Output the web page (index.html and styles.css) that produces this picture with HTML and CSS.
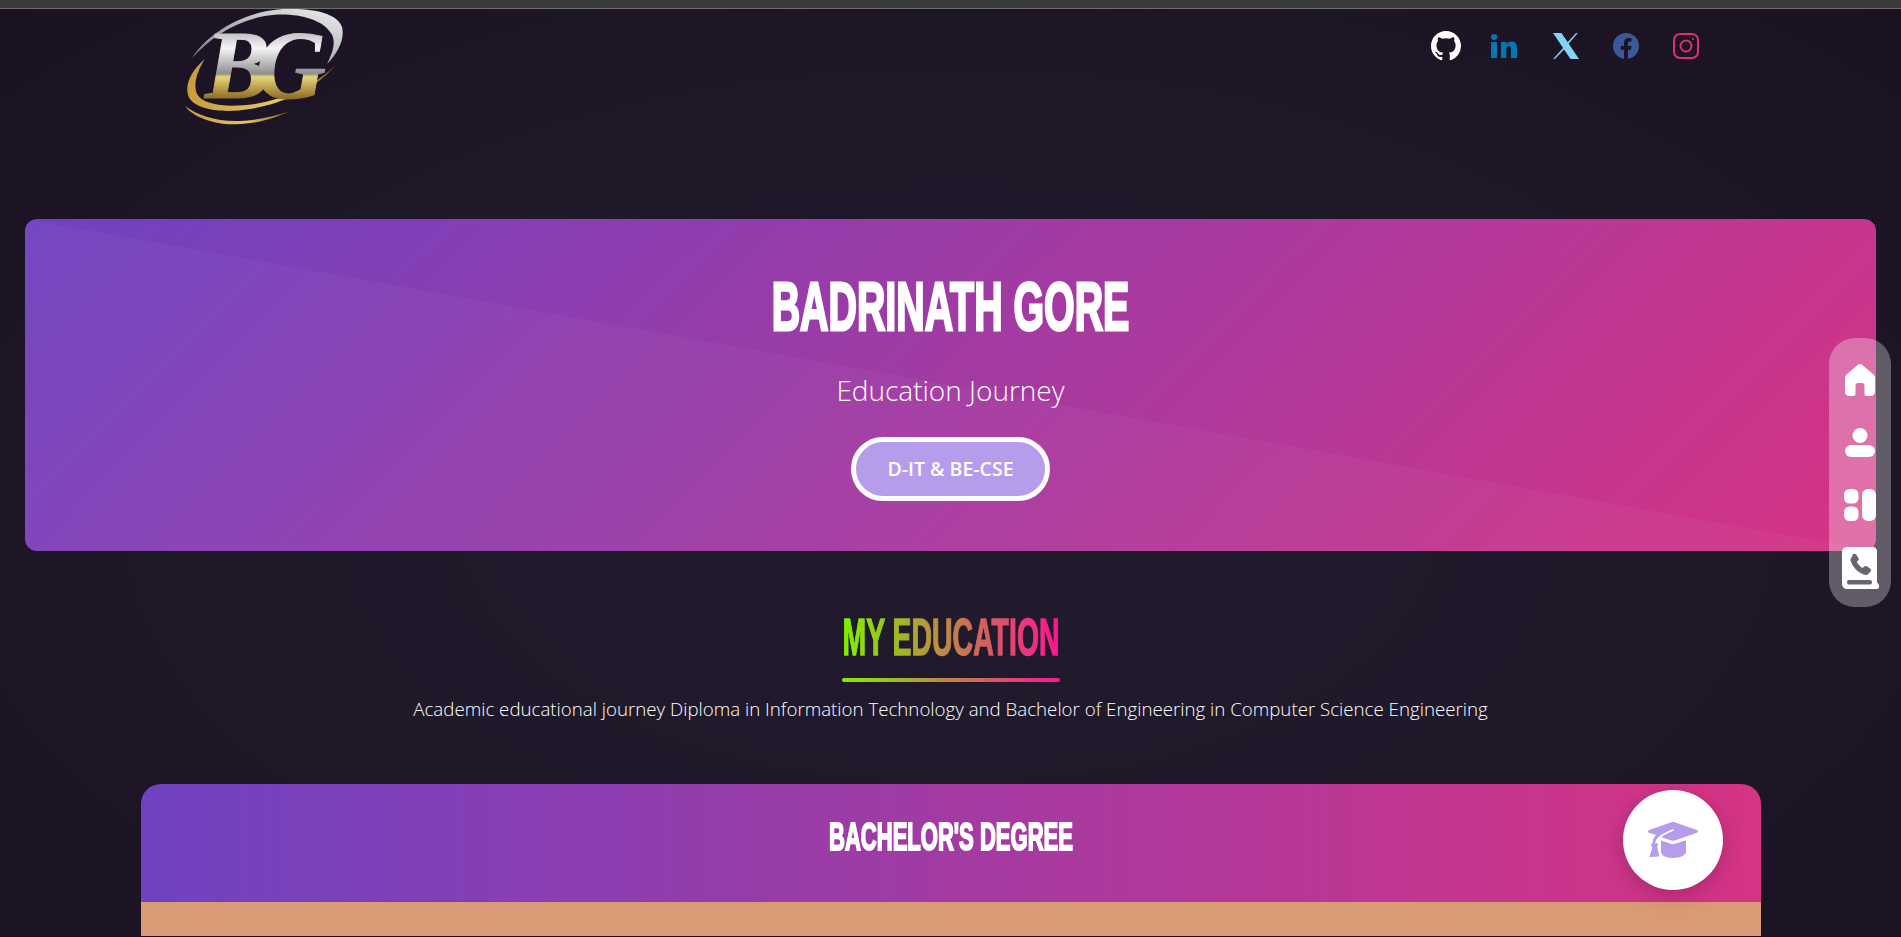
FILE: index.html
```html
<!DOCTYPE html>
<html lang="en">
<head>
    <meta charset="UTF-8">
    <meta name="viewport" content="width=device-width, initial-scale=1.0">
    <title>Badrinath Gore - Education</title>
    <link rel="stylesheet" href="styles.css">
</head>
<body>
    <div class="top-strip"></div>

    <header class="site-header">
        <a class="logo" href="#">
            <svg width="158" height="116" viewBox="0 0 158 116">
                <defs>
                    <linearGradient id="metal" gradientUnits="userSpaceOnUse" x1="0" y1="25" x2="0" y2="89">
                        <stop offset="0" stop-color="#c4c4c8"/>
                        <stop offset="0.22" stop-color="#f5f5f5"/>
                        <stop offset="0.48" stop-color="#b4b4b8"/>
                        <stop offset="0.62" stop-color="#8e8e90"/>
                        <stop offset="0.67" stop-color="#e8d47a"/>
                        <stop offset="1" stop-color="#8f6f26"/>
                    </linearGradient>
                    <linearGradient id="silver" x1="0" y1="1" x2="1" y2="0">
                        <stop offset="0" stop-color="#77777c"/>
                        <stop offset="1" stop-color="#f0f0f2"/>
                    </linearGradient>
                    <linearGradient id="gold" x1="0" y1="0" x2="1" y2="0">
                        <stop offset="0" stop-color="#c79b3c"/>
                        <stop offset="0.6" stop-color="#e6c55f"/>
                        <stop offset="1" stop-color="#7d5f1e"/>
                    </linearGradient>
                </defs>
                <path fill="url(#silver)" d="M7 49C24 22 62 2 98 0c26-1 54 3 59 18 3 12-4 26-15 37 6-12 10-24 3-32C136 10 112 4 88 6 54 9 26 28 7 49z"/>
                <path fill="url(#gold)" d="M20 50C6 62 0 75 3 86c4 14 32 19 62 14 35-6 65-20 85-43-22 20-50 33-80 38-28 4-52 1-58-10-4-10 0-23 8-35z"/>
                <path fill="url(#gold)" d="M0 97c8 11 30 20 55 18 20-1 35-6 50-13-17 6-33 9-50 10-23 1-43-6-55-15z"/>
                <text class="logo-text" x="20" y="89" fill="url(#metal)" stroke="url(#metal)" stroke-width="1">BG</text>
            </svg>
        </a>
        <nav class="socials">
            <a href="#" class="social">
                <svg width="30" height="30" viewBox="0 0 16 16"><path fill="#fff" d="M8 0C3.58 0 0 3.58 0 8c0 3.54 2.29 6.53 5.47 7.59.4.07.55-.17.55-.38 0-.19-.01-.82-.01-1.49-2.01.37-2.53-.49-2.69-.94-.09-.23-.48-.94-.82-1.13-.28-.15-.68-.52-.01-.53.63-.01 1.08.58 1.23.82.72 1.21 1.87.87 2.33.66.07-.52.28-.87.51-1.07-1.78-.2-3.64-.89-3.64-3.95 0-.87.31-1.59.82-2.15-.08-.2-.36-1.02.08-2.12 0 0 .67-.21 2.2.82.64-.18 1.32-.27 2-.27.68 0 1.36.09 2 .27 1.53-1.04 2.2-.82 2.2-.82.44 1.1.16 1.92.08 2.12.51.56.82 1.27.82 2.15 0 3.07-1.87 3.75-3.65 3.95.29.25.54.73.54 1.48 0 1.07-.01 1.93-.01 2.2 0 .21.15.46.55.38A8.013 8.013 0 0016 8c0-4.42-3.58-8-8-8z"/></svg>
            </a>
            <a href="#" class="social social-in">
                <svg width="26" height="24" viewBox="0 0 26 24"><circle cx="3" cy="3" r="3" fill="#0077b5"/><path fill="#0077b5" d="M0 8h6v16H0zM10 8h5.600v2.300C16.600 8.700 18.500 7.600 20.700 7.600c4 0 5.300 2.600 5.300 6.400v10h-6v-8.900c0-2-.6-3-2.100-3-1.700 0-2.600 1.200-2.600 3.100V24H10z"/></svg>
            </a>
            <a href="#" class="social">
                <svg width="26" height="26" viewBox="0 0 26 26"><path fill="#83d4f2" d="M0 0h8.500L26 26h-8.500z"/><path fill="#83d4f2" d="M23 0h1.800L14.500 12l-1-1.400zM10.500 14.600l1 1.400L2 26H.2z"/></svg>
            </a>
            <a href="#" class="social">
                <svg width="26" height="26" viewBox="0 0 26 26"><circle cx="13" cy="13" r="13" fill="#3b5998"/><path fill="#1b1425" d="M11 26V16.800H7.800V13H11v-2.900C11 6.900 12.900 5.100 15.800 5.100c1.400 0 2.800.25 2.800.25v3.100H17c-1.500 0-2 .95-2 1.900V13h3.500l-.56 3.800H15V26z"/></svg>
            </a>
            <a href="#" class="social">
                <svg width="26" height="26" viewBox="0 0 26 26" fill="none" stroke="#e1306c" stroke-width="2"><rect x="1" y="1" width="24" height="24" rx="6"/><circle cx="13" cy="13" r="5.500"/><circle cx="20" cy="6" r="1" fill="#e1306c" stroke="none"/></svg>
            </a>
        </nav>
    </header>

    <section class="hero">
        <h1 class="hero-title">BADRINATH GORE</h1>
        <p class="hero-sub">Education Journey</p>
        <a href="#" class="hero-btn">D-IT &amp; BE-CSE</a>
    </section>

    <section class="section-head">
        <h2 class="section-title">MY EDUCATION</h2>
        <div class="section-line"></div>
        <p class="section-text">Academic educational journey Diploma in Information Technology and Bachelor of Engineering in Computer Science Engineering</p>
    </section>

    <section class="degree-card">
        <div class="degree-head">
            <h3 class="degree-title">BACHELOR'S DEGREE</h3>
            <div class="degree-icon">
                <svg width="50" height="36" viewBox="0 0 50 36">
                    <path fill="#b89cec" d="M25 0c.6 0 1.200.1 1.800.3l21.400 7.400c1 .4 1.800 1 1.800 1.700s-.8 1.300-1.800 1.700L26.800 18.500c-1.200.4-2.400.4-3.600 0l-11-3.800c-2 1.500-3.200 3.400-3.500 5.600.8.500 1.300 1.400 1.300 2.300 0 .8-.3 1.500-.9 2l2.100 8.800c.1.500-.2 1-.7 1.100l-8.300.6c-.5 0-.8-.4-.7-.9l3-8.800c-.8-.5-1.400-1.300-1.400-2.300 0-1 .6-1.900 1.500-2.400.2-2.900 1.400-5.600 3.400-7.700L1.800 11.100C.8 10.700 0 10.100 0 9.400s.8-1.300 1.800-1.700L23.200.3C23.800.1 24.400 0 25 0zM13 18.500l9.800 3.300c1.400.5 3 .5 4.400 0l10.800-3.600V30c0 3-5.800 6-13 6s-12-3-12-6z"/>
                    <path fill="none" stroke="#fff" stroke-width="1.500" stroke-linecap="round" d="M8 21c.4-5 6-8.500 17-13"/>
                </svg>
            </div>
        </div>
        <div class="degree-body"></div>
    </section>
    <div class="bottom-edge"></div>

    <aside class="side-nav">
        <a href="#" class="side-link">
            <svg width="30" height="32" viewBox="0 0 30 32"><path fill="#fff" d="M13 .8c1.200-1 2.800-1 4 0l11.500 9.700c1 .8 1.500 2 1.500 3.200V28c0 2.200-1.800 4-4 4h-4.500c-1.100 0-2-.9-2-2v-8.500c0-1.400-1.100-2.500-2.500-2.500h-4c-1.400 0-2.500 1.100-2.500 2.500V30c0 1.100-.9 2-2 2H4c-2.200 0-4-1.800-4-4V13.700c0-1.200.5-2.400 1.500-3.200z"/></svg>
        </a>
        <a href="#" class="side-link">
            <svg width="30" height="29" viewBox="0 0 30 29"><circle cx="15" cy="7.500" r="7.500" fill="#fff"/><rect x="0" y="17" width="30" height="12" rx="6" fill="#fff"/></svg>
        </a>
        <a href="#" class="side-link">
            <svg width="32" height="32" viewBox="0 0 32 32" fill="#fff"><rect x="0" y="0" width="14.500" height="14.500" rx="5.500"/><rect x="0" y="17.500" width="14.500" height="14.500" rx="5.500"/><rect x="18" y="0" width="14" height="32" rx="6"/></svg>
        </a>
        <a href="#" class="side-link side-link-book">
            <svg width="37" height="42" viewBox="0 0 37 42"><path fill="#fff" d="M5 0h26c2.200 0 4 1.800 4 4v31l2 3v2c0 1.100-.9 2-2 2H5c-2.800 0-5-2.200-5-5V5C0 2.200 2.200 0 5 0z"/><rect x="5" y="33" width="25" height="4.500" rx="2" fill="#6b6570"/><path transform="translate(-2.500 -3) scale(1.220)" fill="#6b6570" d="M11 8.500c.8-.8 2.100-.7 2.700.2l1.800 2.700c.5.700.4 1.600-.2 2.200l-1.100 1.100c1 2.100 2.800 3.900 4.900 4.900l1.100-1.100c.6-.6 1.500-.7 2.200-.2l2.700 1.800c.9.600 1 1.900.2 2.700l-1.500 1.500c-.9.900-2.200 1.300-3.400.9-5.300-1.700-9.500-5.900-11.200-11.200-.4-1.200 0-2.500.9-3.400z"/></svg>
        </a>
    </aside>
</body>
</html>
```

FILE: styles.css
```css
/* page */
html, body {
    height: 937px;
    overflow: hidden;
}

body {
    margin: 0;
    font-family: "Open Sans", "Noto Sans", sans-serif;
    color: #fff;
    background: radial-gradient(ellipse at 50% 55%, #221b2e 0%, #1f1829 55%, #1a1122 100%);
}

a {
    color: inherit;
    text-decoration: none;
}

.top-strip {
    height: 8px;
    background-color: #3a3a3a;
    border-bottom: 1px solid #6c6c6c;
}

/* header */
.site-header {
    height: 210px;
    padding: 0 185px;
    display: flex;
    justify-content: space-between;
    align-items: flex-start;
    box-sizing: border-box;
}

.logo {
    display: block;
    height: 116px;
}

.logo-text {
    font-family: "Liberation Serif", serif;
    font-style: italic;
    font-weight: bold;
    font-size: 97px;
    letter-spacing: -14px;
}

.socials {
    display: flex;
    margin-top: 22px;
}

.social {
    width: 60px;
    height: 30px;
    display: flex;
    align-items: center;
    justify-content: center;
}

.social-in {
    padding-right: 4px;
    box-sizing: border-box;
}

/* hero banner */
.hero {
    position: relative;
    height: 332px;
    margin: 0 25px;
    padding-top: 53px;
    box-sizing: border-box;
    border-radius: 12px;
    overflow: hidden;
    text-align: center;
    background: linear-gradient(135deg, #6f42c1 0%, #d63384 100%);
}

.hero::before {
    content: "";
    position: absolute;
    inset: 0;
    background-color: rgba(255, 255, 255, 0.035);
    clip-path: polygon(0 0, 100% 100%, 0 100%);
}

.hero-title, .hero-sub, .hero-btn {
    position: relative;
}

/* no condensed face installed, so the bold sans is squeezed */
.hero-title {
    margin: 0;
    font-family: "Liberation Sans", sans-serif;
    font-size: 69px;
    line-height: 70px;
    font-weight: 700;
    -webkit-text-stroke: 3px #fff;
    transform: scaleX(0.57);
}

.hero-sub {
    margin: 28px 0 0;
    font-size: 28px;
    line-height: 40px;
    font-weight: 300;
}

.hero-btn {
    display: inline-block;
    margin-top: 27px;
    width: 199px;
    height: 64px;
    line-height: 54px;
    box-sizing: border-box;
    border: 5px solid #fff;
    border-radius: 32px;
    background-color: #b89cec;
    font-size: 19.5px;
    font-weight: 600;
}

/* section heading */
.section-head {
    text-align: center;
    padding-top: 62px;
}

.section-title {
    margin: 0 auto;
    width: 390px;
    font-family: "Liberation Sans", sans-serif;
    font-size: 51px;
    line-height: 50px;
    font-weight: 700;
    white-space: nowrap;
    transform: scaleX(0.558);
    background: linear-gradient(90deg, #82f000, #ff1493);
    -webkit-background-clip: text;
    background-clip: text;
    color: transparent;
    -webkit-text-stroke: 1.5px transparent;
}

.section-line {
    width: 218px;
    height: 4px;
    margin: 15px auto 0;
    border-radius: 2px;
    background: linear-gradient(90deg, #82f000, #ff1493);
}

.section-text {
    margin: 14px 0 0;
    font-size: 18.7px;
    line-height: 26px;
    font-weight: 300;
}

/* degree card */
.degree-card {
    margin: 62px 140px 0 141px;
    border-radius: 20px 20px 0 0;
    overflow: hidden;
}

.degree-head {
    height: 118px;
    padding-top: 33px;
    box-sizing: border-box;
    text-align: center;
    background: linear-gradient(90deg, #6f42c1, #d63384);
}

.degree-title {
    margin: 0;
    font-family: "Liberation Sans", sans-serif;
    font-size: 38px;
    line-height: 40px;
    font-weight: 700;
    -webkit-text-stroke: 2px #fff;
    transform: scaleX(0.58);
}

.degree-icon {
    position: absolute;
    left: 1623px;
    top: 790px;
    width: 100px;
    height: 100px;
    border-radius: 50%;
    background-color: #fff;
    box-shadow: 0 5px 20px rgba(0, 0, 0, 0.2);
    display: flex;
    align-items: center;
    justify-content: center;
}

.degree-body {
    height: 34px;
    background-color: #d99a76;
}

.bottom-edge {
    height: 1px;
    background-color: #1a1122;
}

/* floating side nav */
.side-nav {
    position: fixed;
    left: 1829px;
    top: 338px;
    width: 62px;
    height: 269px;
    padding-top: 26px;
    box-sizing: border-box;
    border-radius: 26px;
    background-color: rgba(255, 255, 255, 0.3);
    display: flex;
    flex-direction: column;
    align-items: center;
    gap: 32px;
}

.side-link {
    display: flex;
}

.side-link-book {
    margin-top: -6px;
}
```
